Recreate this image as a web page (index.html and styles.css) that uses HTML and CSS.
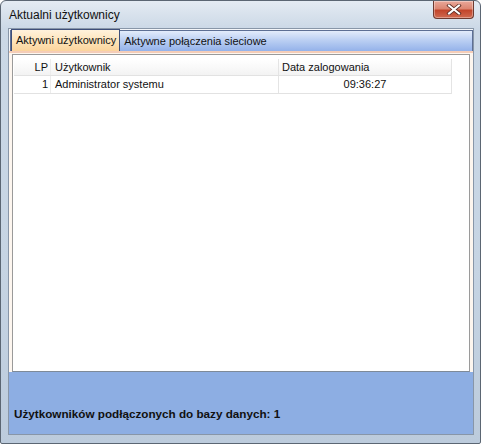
FILE: index.html
```html
<!DOCTYPE html>
<html lang="pl">
<head>
<meta charset="utf-8">
<title>Aktualni użytkownicy</title>
<link rel="stylesheet" href="styles.css">
</head>
<body>
<div class="window">
  <div class="titlebar">
    <span class="title">Aktualni użytkownicy</span>
    <div class="close">
      <svg width="16" height="11" viewBox="0 0 16 11">
        <path d="M3 1.5 L13 9.5 M13 1.5 L3 9.5" stroke="#5a2a22" stroke-width="3.6" stroke-linecap="square" fill="none"/>
        <path d="M3 1.5 L13 9.5 M13 1.5 L3 9.5" stroke="#ffffff" stroke-width="2" stroke-linecap="square" fill="none"/>
      </svg>
    </div>
  </div>
  <div class="client">
    <div class="tabs">
      <div class="tab active">Aktywni użytkownicy</div>
      <div class="tab">Aktywne połączenia sieciowe</div>
    </div>
    <div class="page">
      <div class="panel">
        <div class="grid">
          <div class="row head">
            <div class="cell lp">LP</div>
            <div class="cell user">Użytkownik</div>
            <div class="cell date">Data zalogowania</div>
          </div>
          <div class="row">
            <div class="cell lp">1</div>
            <div class="cell user">Administrator systemu</div>
            <div class="cell date center">09:36:27</div>
          </div>
        </div>
      </div>
    </div>
    <div class="status">Użytkowników podłączonych do bazy danych: 1</div>
  </div>
</div>
</body>
</html>
```
FILE: styles.css
```css
html, body {
  margin: 0;
  padding: 0;
  background: #ffffff;
}
.window {
  box-sizing: border-box;
  width: 481px;
  height: 444px;
  border: 1px solid #5b6673;
  border-radius: 6px 6px 2px 2px;
  background: linear-gradient(180deg, #e4ebf3 0px, #cbd8e6 28px, #c6d4e3 60%, #bccbdc 100%);
  display: flex;
  flex-direction: column;
  padding: 0 6px 8px 7px;
  font-family: "Liberation Sans", Arial, sans-serif;
}
.titlebar {
  height: 27px;
  display: flex;
  justify-content: space-between;
  align-items: flex-start;
}
.title {
  font-family: "Liberation Sans", Arial, sans-serif;
  font-size: 12px;
  color: #111;
  margin-top: 7px;
  margin-left: 1px;
}
.close {
  width: 41px;
  height: 18px;
  box-sizing: border-box;
  border: 1px solid #6e3a30;
  border-top: none;
  border-radius: 0 0 4px 4px;
  background: linear-gradient(180deg, #e9a89a 0%, #dc8672 45%, #c2452b 55%, #d06a50 100%);
  display: flex;
  align-items: center;
  justify-content: center;
  margin-right: 0;
  box-shadow: inset 0 0 0 1px rgba(255,255,255,0.35);
}
.close svg { display: block; }
.client {
  flex: 1;
  display: flex;
  flex-direction: column;
  border: 1px solid #8896a8;
  background: #f4f6f9;
}
.tabs {
  display: flex;
  height: 20px;
  margin: 1px 0 0 1px;
  border: 1px solid #5d6f94;
  border-bottom: none;
  background: linear-gradient(180deg, #e3ecfb 0%, #bcd0f3 45%, #94b2ea 100%);
  align-items: stretch;
}
.tab {
  font-size: 11px;
  color: #111;
  padding: 0 4px;
  line-height: 20px;
}
.tab.active {
  background: linear-gradient(180deg, #fff2dc 0%, #fde3b8 55%, #fbd49c 100%);
  border: 1px solid #3e4f7a;
  border-bottom: none;
  margin-top: -2px;
  line-height: 21px;
  padding: 0 3px 0 4px;
}
.page {
  background: #fdf6ef;
  border-top: 2px solid #f5cdb8;
  padding: 1px 3px 0 3px;
  height: 321px;
  box-sizing: border-box;
  display: flex;
}
.panel {
  flex: 1;
  background: #ffffff;
  border: 1px solid #9a9a9a;
  border-bottom-color: #7e8a98;
  padding: 4px 0 0 1px;
}
.grid {
  width: 437px;
  border-right: 1px solid #e4e4e4;
}
.row {
  display: flex;
  height: 17px;
  border-bottom: 1px solid #e2e2e2;
  font-size: 11px;
  color: #111;
}
.row.head {
  height: 16px;
  background: linear-gradient(180deg, #ffffff 0%, #f3f3f3 100%);
}
.cell {
  line-height: 17px;
  box-sizing: border-box;
  white-space: nowrap;
}
.row.head .cell { line-height: 16px; }
.lp {
  width: 36px;
  text-align: right;
  padding-right: 2px;
}
.user {
  width: 228px;
  padding-left: 4px;
  border-left: 1px solid #ececec;
}
.date {
  flex: 1;
  padding-left: 3px;
  border-left: 1px solid #e4e4e4;
}
.center {
  text-align: center;
  padding-left: 0;
}
.status {
  flex: 1;
  background: #8daee3;
  font-weight: bold;
  font-size: 11.7px;
  color: #111;
  padding: 35px 0 0 5px;
}
```
